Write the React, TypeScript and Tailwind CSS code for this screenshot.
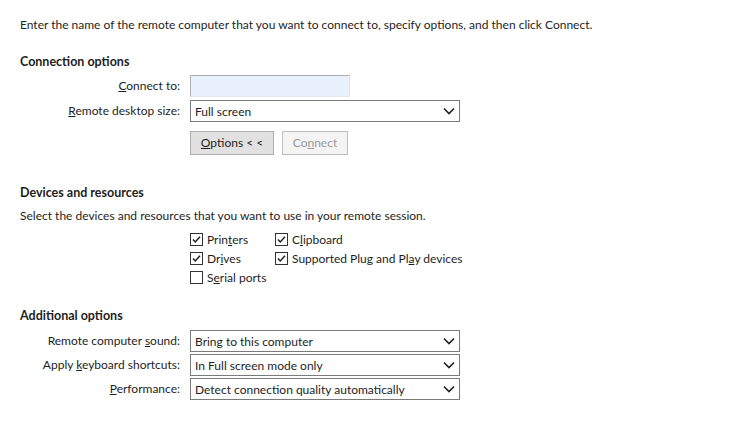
import type { ReactNode } from "react";

const FONT = { fontFamily: 'Lato, "Noto Sans", sans-serif' };

function Chevron() {
  return (
    <svg viewBox="0 0 12 8" className="h-[8px] w-[12px]" aria-hidden="true">
      <path d="M1 1.5 6 6.5 11 1.5" fill="none" stroke="#222" strokeWidth="1.6" />
    </svg>
  );
}

function Select({ value }: { value: string }) {
  return (
    <div className="flex h-[22px] w-[270px] items-center justify-between border border-[#7a7a7a] bg-white pl-[4px] pr-[4px] text-[12px] text-[#1e1e1e]">
      <span className="pt-[1px]">{value}</span>
      <Chevron />
    </div>
  );
}

function Row({ label, children, className = "" }: { label: ReactNode; children: ReactNode; className?: string }) {
  return (
    <div className={`flex items-center ${className}`}>
      <div className="w-[160px] text-right text-[12px] text-[#1e1e1e]">{label}</div>
      <div className="ml-[10px]">{children}</div>
    </div>
  );
}

function Check({ checked, children }: { checked: boolean; children: ReactNode }) {
  return (
    <div className="flex h-[19px] items-center gap-[4px] text-[12px] text-[#1e1e1e]">
      <span className="flex h-[13px] w-[13px] shrink-0 items-center justify-center border border-[#333] bg-white">
        {checked && (
          <svg viewBox="0 0 11 11" className="h-[11px] w-[11px]" aria-hidden="true">
            <path d="M2 5.5 4.3 8 9 2.8" fill="none" stroke="#222" strokeWidth="1.5" />
          </svg>
        )}
      </span>
      <span>{children}</span>
    </div>
  );
}

export default function App() {
  return (
    <div className="h-[422px] w-[745px] bg-white pl-[20px] pt-[17px] leading-[16px]" style={FONT}>
      <p className="text-[12px] text-[#1e1e1e]">
        Enter the name of the remote computer that you want to connect to, specify options, and then click Connect.
      </p>

      <h2 className="mt-[21px] text-[12.5px] font-bold text-[#1e1e1e]">Connection options</h2>

      <Row label={<><u>C</u>onnect to:</>} className="mt-[5px]">
        <div className="h-[22px] w-[160px] border border-[#abadb3] border-b-[#e3e9ef] border-r-[#dbdfe6] bg-[#e8f1fc]" />
      </Row>
      <Row label={<><u>R</u>emote desktop size:</>} className="mt-[3px]">
        <Select value="Full screen" />
      </Row>
      <div className="ml-[170px] mt-[9px] flex gap-[8px]">
        <button className="h-[24px] w-[84px] border border-[#adadad] bg-[#e1e1e1] text-[12px] text-[#1e1e1e]">
          <u>O</u>ptions &lt; &lt;
        </button>
        <button className="h-[24px] w-[66px] border border-[#bfbfbf] bg-[#f4f4f4] text-[12px] text-[#9a9a9a]">
          Co<u>n</u>nect
        </button>
      </div>

      <h2 className="mt-[30px] text-[12.5px] font-bold text-[#1e1e1e]">Devices and resources</h2>
      <p className="mt-[7px] text-[12px] text-[#1e1e1e]">
        Select the devices and resources that you want to use in your remote session.
      </p>
      <div className="ml-[170px] mt-[6px] flex">
        <div className="w-[85px]">
          <Check checked>Prin<u>t</u>ers</Check>
          <Check checked>Dr<u>i</u>ves</Check>
          <Check checked={false}>S<u>e</u>rial ports</Check>
        </div>
        <div>
          <Check checked>C<u>l</u>ipboard</Check>
          <Check checked>Supported Plug and Pl<u>a</u>y devices</Check>
        </div>
      </div>

      <h2 className="mt-[21px] text-[12.5px] font-bold text-[#1e1e1e]">Additional options</h2>
      <Row label={<>Remote computer <u>s</u>ound:</>} className="mt-[6px]">
        <Select value="Bring to this computer" />
      </Row>
      <Row label={<>Apply <u>k</u>eyboard shortcuts:</>} className="mt-[2px]">
        <Select value="In Full screen mode only" />
      </Row>
      <Row label={<><u>P</u>erformance:</>} className="mt-[2px]">
        <Select value="Detect connection quality automatically" />
      </Row>
    </div>
  );
}
